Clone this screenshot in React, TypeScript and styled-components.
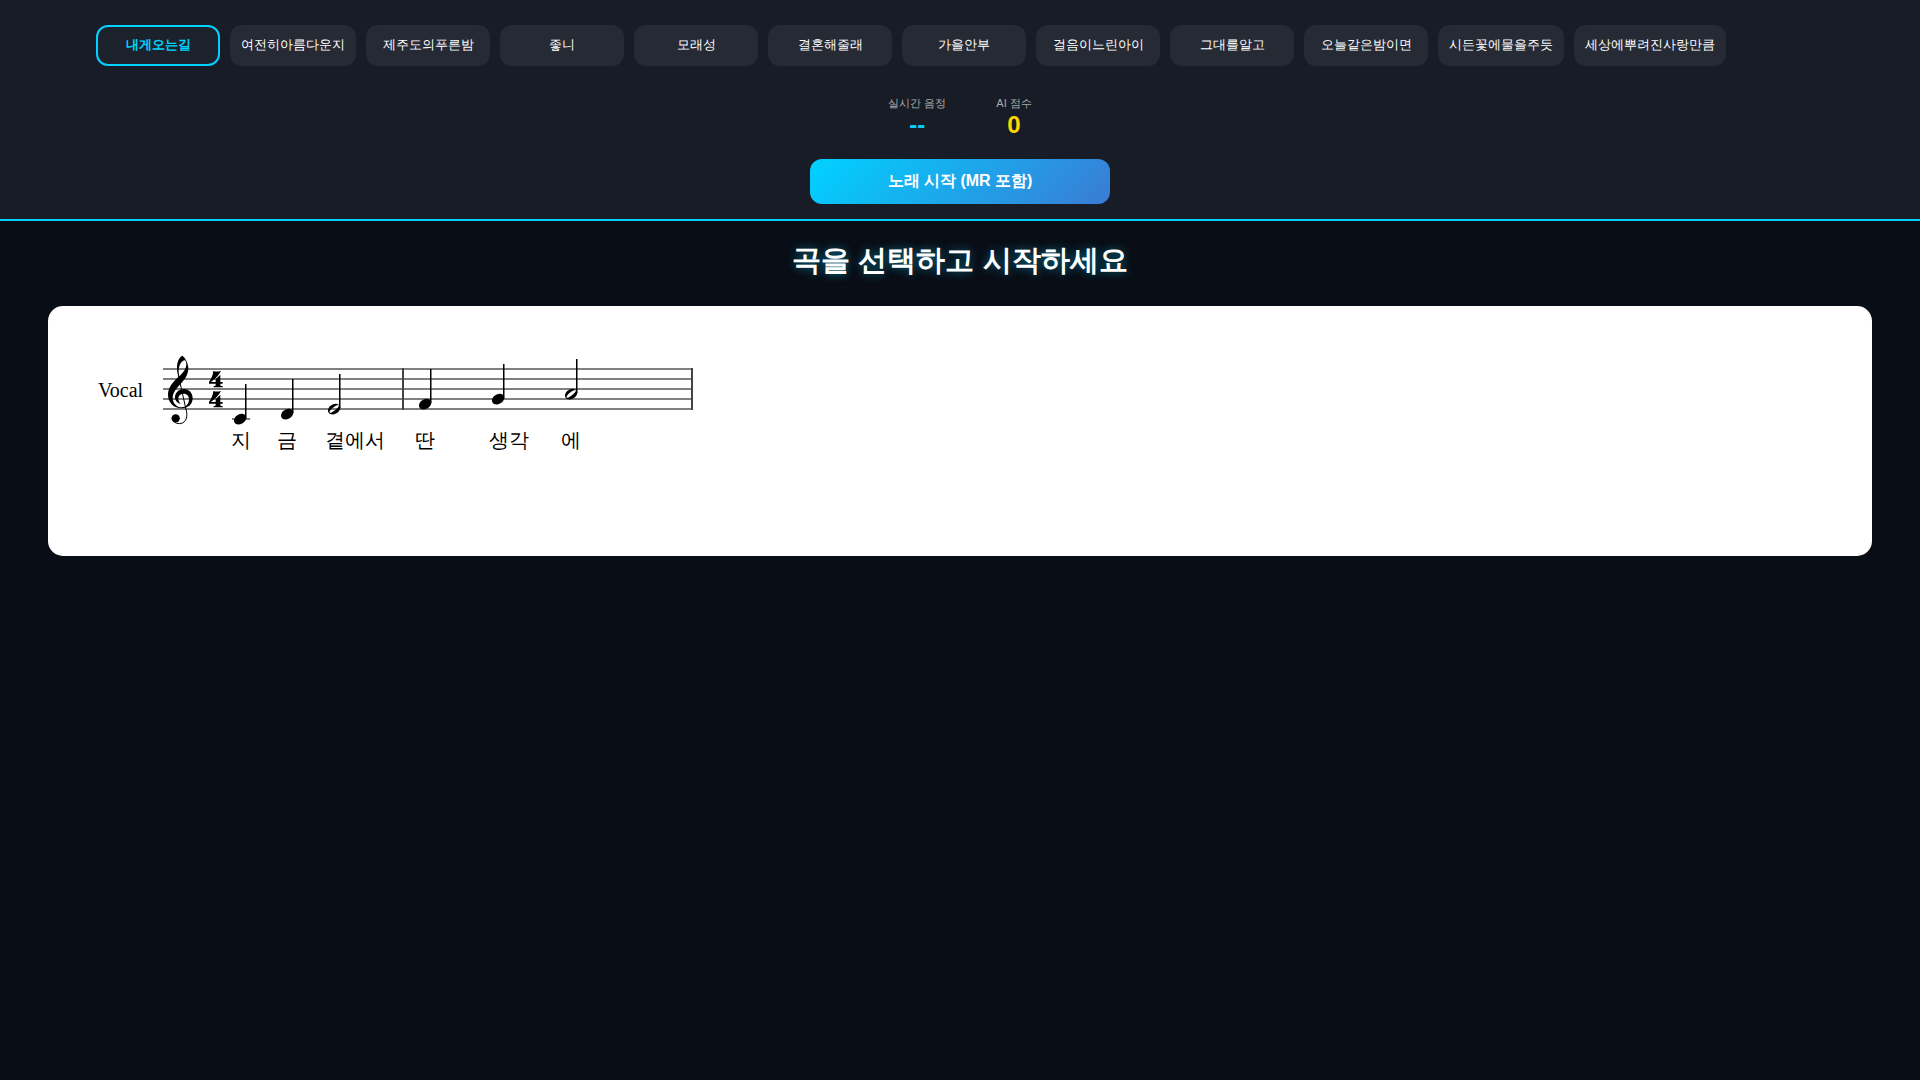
import React, { useState } from "react";
import styled, { createGlobalStyle } from "styled-components";

const GlobalStyle = createGlobalStyle`
  * { box-sizing: border-box; }
  body {
    margin: 0;
    min-height: 100vh;
    background: #090d15;
    color: #fff;
    font-family: "Liberation Sans", sans-serif;
  }
`;

const Header = styled.header`
  display: flex;
  flex-direction: column;
  align-items: center;
  padding: 15px 0;
  background: #181c26;
  border-bottom: 2px solid #00d2ff;
`;

const SongList = styled.nav`
  display: flex;
  gap: 10px;
  width: 90%;
  padding: 10px 0;
  overflow-x: auto;
`;

const SongButton = styled.button<{ $active: boolean }>`
  flex: none;
  min-width: 124px;
  height: 41px;
  padding: 0 9px 2px;
  border: 2px solid ${(p) => (p.$active ? "#00d2ff" : "transparent")};
  border-radius: 12px;
  background: ${(p) => (p.$active ? "#1b222c" : "#262a34")};
  color: ${(p) => (p.$active ? "#00d2ff" : "#fff")};
  font-family: inherit;
  font-size: 13px;
  font-weight: ${(p) => (p.$active ? 700 : 400)};
  white-space: nowrap;
  cursor: pointer;
`;

const Stats = styled.dl`
  display: flex;
  gap: 50px;
  margin: 20px 0 19px;
`;

const Stat = styled.div`
  text-align: center;
`;

const StatLabel = styled.dt`
  color: #aaa;
  font-size: 11px;
  line-height: 14px;
`;

const StatValue = styled.dd<{ $color: string }>`
  margin: 0;
  color: ${(p) => p.$color};
  font-size: 24px;
  line-height: 30px;
  font-weight: 700;
`;

const StartButton = styled.button`
  width: 300px;
  height: 45px;
  border: 0;
  border-radius: 12px;
  background: linear-gradient(135deg, #00d2ff, #3a7bd5);
  color: #fff;
  font-family: inherit;
  font-size: 16px;
  font-weight: 700;
  cursor: pointer;
`;

const Title = styled.h1`
  margin: 19px 0 26px;
  font-size: 29px;
  line-height: 40px;
  text-align: center;
  text-shadow: 0 0 10px rgba(0, 210, 255, 0.5);
`;

const Sheet = styled.section`
  width: 95%;
  min-height: 250px;
  margin: 0 auto;
  border-radius: 15px;
  background: #fff;
  overflow: hidden;
`;

const Score = styled.svg`
  display: block;
  font-family: "Liberation Serif", serif;
  font-size: 20px;
`;

const songs = [
  "내게오는길",
  "여전히아름다운지",
  "제주도의푸른밤",
  "좋니",
  "모래성",
  "결혼해줄래",
  "가을안부",
  "걸음이느린아이",
  "그대를알고",
  "오늘같은밤이면",
  "시든꽃에물을주듯",
  "세상에뿌려진사랑만큼",
];

type Note = { x: number; y: number; half?: boolean; ledger?: boolean; lyric: string; lx: number };

const notes: Note[] = [
  { x: 186, y: 113, ledger: true, lyric: "지", lx: 183 },
  { x: 233, y: 108, lyric: "금", lx: 229 },
  { x: 280, y: 103, half: true, lyric: "곁에서", lx: 277 },
  { x: 371, y: 98, lyric: "딴", lx: 367 },
  { x: 444, y: 93, lyric: "생각", lx: 441 },
  { x: 517, y: 88, half: true, lyric: "에", lx: 513 },
];

const HEAD =
  "M262-186C266-186 272-186 273-186C280-186 274-186 285-186C375-181 428-122 428-48C428-12 416 29 386 68C329 145 236 187 155 187C92 187 38 162 12 111C4 91 0 72 0 51C0-58 122-179 262-186Z";
const HOLE =
  "M372-132C344-162 262-112 180-50C100 12 38 80 58 118C76 154 150 112 242 42C324-20 394-98 372-132Z";

const TrebleClef = () => (
  <g transform="translate(102 39) scale(0.3333)">
    <path
      fillRule="evenodd"
      d="M97 32.5C86 38 81 54 81 68C81 78 83 88 85 96C70 110 54 126 54 150C54 173 72 190 95 190C115 190 128 177 128 160C128 143 116 132 102 132C86 132 75 143 75 157C75 167 82 174 92 177C87 171 85 166 85 161C85 152 92 146 101 146C111 146 117 153 117 163C117 177 108 187 95 187C80 187 68 174 68 158C68 142 82 127 97 111C107 100 115 86 115 70C115 54 104 36 97 32.5ZM104 46C95 47 86 61 86 78C86 84 87 90 88 94C98 85 109 72 109 58C109 51 107 46 104 46Z"
    />
    <path d="M86 95L110 202C113 222 104 236 88 236C76 236 68 229 67 220" fill="none" stroke="#000" strokeWidth="3" />
    <circle cx="77" cy="220" r="12.5" />
  </g>
);

const TimeDigit = ({ y }: { y: number }) => (
  <path
    transform={`translate(152 ${y}) scale(0.3333)`}
    d="M40 33C47 35 55 35 63 33C57 46 45 57 33 66H47V58L61 44V66H68V71H61V75C61 77 63 78 68 78V82H41V78C46 78 47 77 47 75V71H27V66C34 56 39 45 40 33Z"
  />
);

const ScoreDrawing = () => (
  <Score width="700" height="250" role="img" aria-label="Vocal">
    <text x="50" y="91">Vocal</text>
    {[0, 1, 2, 3, 4].map((i) => (
      <rect key={i} x="115" y={62 + i * 10} width="530" height="2" fill="#808080" />
    ))}
    <TrebleClef />
    <TimeDigit y={54} />
    <TimeDigit y={74} />
    <rect x="354" y="62" width="2" height="42" fill="#444" />
    <rect x="643" y="62" width="2" height="42" fill="#444" />
    {notes.map((n) => (
      <g key={n.x}>
        {n.ledger && <rect x={n.x - 2} y={n.y - 1} width="18" height="2" fill="#808080" />}
        <path
          transform={`translate(${n.x} ${n.y}) scale(0.0288)`}
          fillRule="evenodd"
          d={n.half ? HEAD + HOLE : HEAD}
        />
        <rect x={n.x + 11} y={n.y - 35} width="1.5" height="34" />
        <text x={n.lx} y="141">{n.lyric}</text>
      </g>
    ))}
  </Score>
);

export default function App() {
  const [selected, setSelected] = useState(0);
  return (
    <>
      <GlobalStyle />
      <Header>
        <SongList>
          {songs.map((song, i) => (
            <SongButton key={song} $active={i === selected} onClick={() => setSelected(i)}>
              {song}
            </SongButton>
          ))}
        </SongList>
        <Stats>
          <Stat>
            <StatLabel>실시간 음정</StatLabel>
            <StatValue $color="#00d2ff">--</StatValue>
          </Stat>
          <Stat>
            <StatLabel>AI 점수</StatLabel>
            <StatValue $color="#ffd700">0</StatValue>
          </Stat>
        </Stats>
        <StartButton>노래 시작 (MR 포함)</StartButton>
      </Header>
      <main>
        <Title>곡을 선택하고 시작하세요</Title>
        <Sheet>
          <ScoreDrawing />
        </Sheet>
      </main>
    </>
  );
}
